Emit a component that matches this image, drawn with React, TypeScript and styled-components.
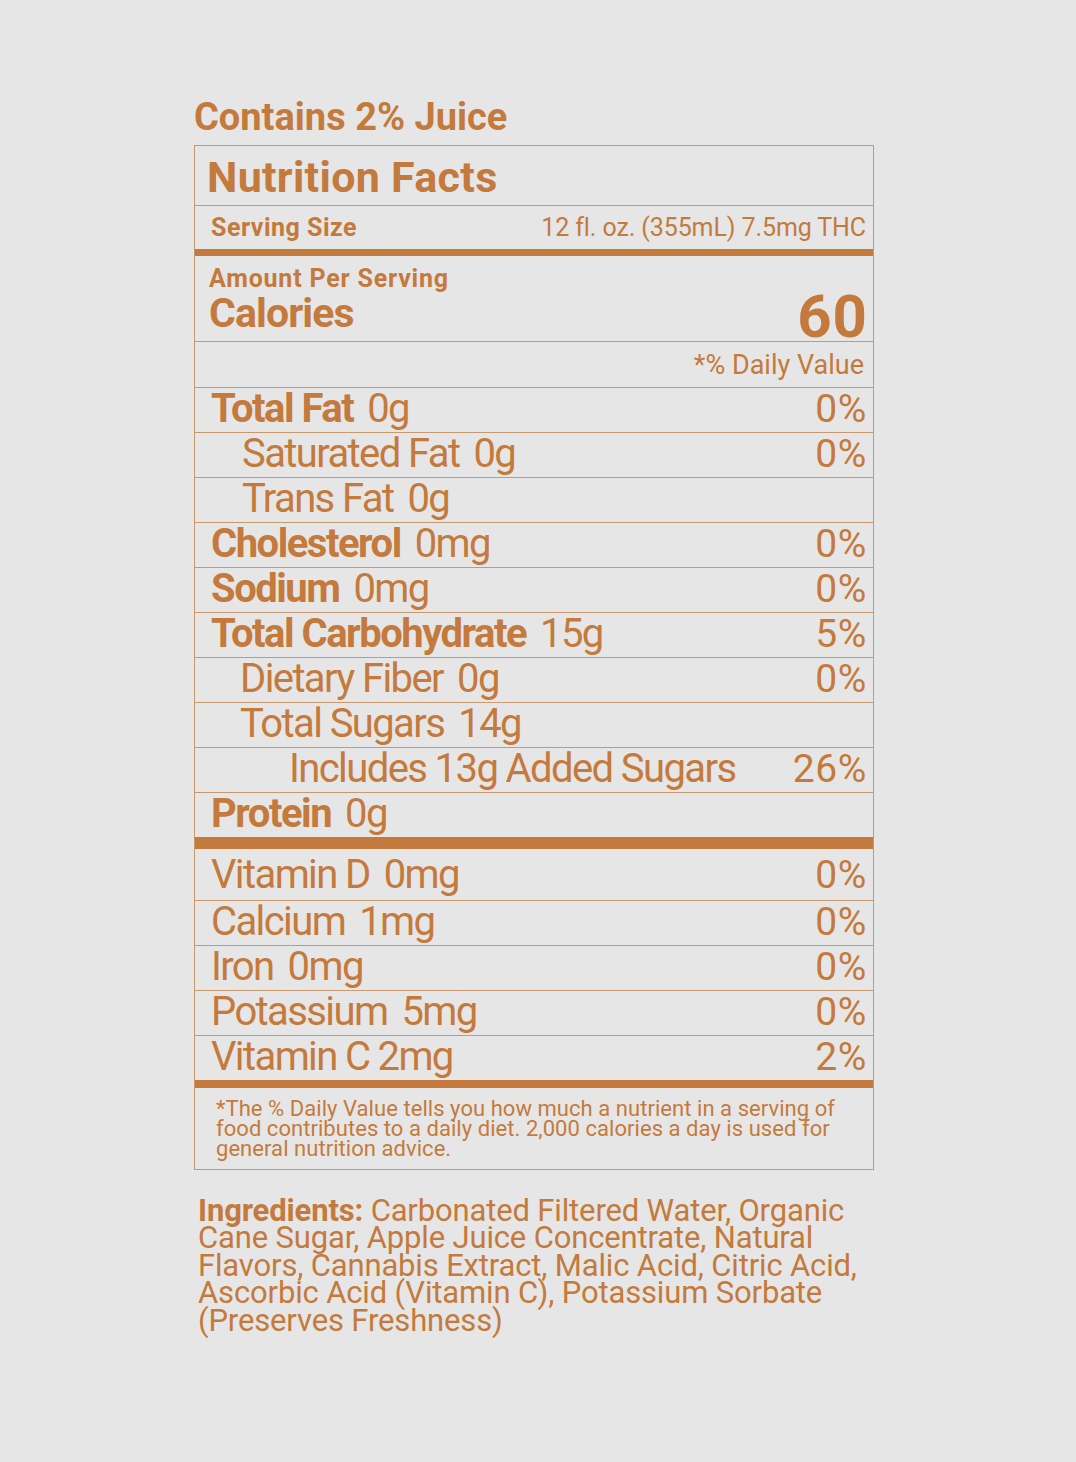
import styled, { createGlobalStyle } from 'styled-components';

type TNutrient = {
  label: string;
  amount?: string;
  dv?: string;
  bold?: boolean;
  indent?: number;
};

const ink = '#c47a3c';
const rule = '#c9986c';

const nutrients: TNutrient[] = [
  { label: 'Total Fat', amount: '0g', dv: '0%', bold: true },
  { label: 'Saturated Fat', amount: '0g', dv: '0%', indent: 31 },
  { label: 'Trans Fat', amount: '0g', indent: 31 },
  { label: 'Cholesterol', amount: '0mg', dv: '0%', bold: true },
  { label: 'Sodium', amount: '0mg', dv: '0%', bold: true },
  { label: 'Total Carbohydrate', amount: '15g', dv: '5%', bold: true },
  { label: 'Dietary Fiber', amount: '0g', dv: '0%', indent: 29 },
  { label: 'Total Sugars', amount: '14g', indent: 29 },
  { label: 'Includes 13g Added Sugars', dv: '26%', indent: 78 },
  { label: 'Protein', amount: '0g', bold: true },
];

const vitamins: TNutrient[] = [
  { label: 'Vitamin D', amount: '0mg', dv: '0%' },
  { label: 'Calcium', amount: '1mg', dv: '0%' },
  { label: 'Iron', amount: '0mg', dv: '0%' },
  { label: 'Potassium', amount: '5mg', dv: '0%' },
  { label: 'Vitamin C', amount: '2mg', dv: '2%' },
];

export default function App() {
  return (
    <>
      <GlobalStyle />
      <Page>
        <Juice>Contains 2% Juice</Juice>
        <Panel>
          <Title>Nutrition Facts</Title>
          <ServingRow>
            <strong>Serving Size</strong>
            <span>12 fl. oz. (355mL) 7.5mg THC</span>
          </ServingRow>
          <Bar $size={7} />
          <CaloriesBlock>
            <div>
              <AmountLabel>Amount Per Serving</AmountLabel>
              <CaloriesLabel>Calories</CaloriesLabel>
            </div>
            <CaloriesValue>60</CaloriesValue>
          </CaloriesBlock>
          <DailyHead>*% Daily Value</DailyHead>
          {nutrients.map((n) => (
            <Row key={n.label} $indent={n.indent ?? 0}>
              <Label $bold={n.bold}>
                {n.label}
                {n.amount && <Amount $gap={14}>{n.amount}</Amount>}
              </Label>
              {n.dv && <Dv>{n.dv}</Dv>}
            </Row>
          ))}
          <Bar $size={12} />
          {vitamins.map((v, i) => (
            <Row key={v.label} $indent={0} $first={i === 0}>
              <Label>
                {v.label}
                <Amount $gap={v.label === 'Vitamin C' ? 8 : 14}>{v.amount}</Amount>
              </Label>
              <Dv>{v.dv}</Dv>
            </Row>
          ))}
          <Bar $size={8} />
          <Footnote>
            *The % Daily Value tells you how much a nutrient in a serving of
            <br />
            food contributes to a daily diet. 2,000 calories a day is used for
            <br />
            general nutrition advice.
          </Footnote>
        </Panel>
        <Ingredients>
          <strong>Ingredients:</strong> Carbonated Filtered Water, Organic
          <br />
          Cane Sugar, Apple Juice Concentrate, Natural
          <br />
          Flavors, Cannabis Extract, Malic Acid, Citric Acid,
          <br />
          Ascorbic Acid (Vitamin C), Potassium Sorbate
          <br />
          (Preserves Freshness)
        </Ingredients>
      </Page>
    </>
  );
}

const GlobalStyle = createGlobalStyle`
  html, body {
    margin: 0;
    background: #e6e6e6;
  }
  body {
    font-family: Roboto, 'Liberation Sans', sans-serif;
    color: ${ink};
  }
`;

const Page = styled.div`
  min-height: 1462px;
  box-sizing: border-box;
  padding: 99px 0 0 194px;
`;

const Juice = styled.h1`
  margin: 0 0 10px;
  font-size: 38px;
  line-height: 36px;
  font-weight: 700;
  letter-spacing: 0;
`;

const Panel = styled.section`
  width: 680px;
  box-sizing: border-box;
  border: 1px solid ${rule};
`;

const Title = styled.h2`
  margin: 0;
  height: 59px;
  box-sizing: border-box;
  padding: 3px 0 0 12px;
  font-size: 43px;
  line-height: 56px;
  font-weight: 700;
  letter-spacing: 0.3px;
`;

const ServingRow = styled.div`
  display: flex;
  justify-content: space-between;
  height: 44px;
  box-sizing: border-box;
  border-top: 1px solid ${rule};
  padding: 1px 7px 0 16px;
  font-size: 25px;
  line-height: 42px;
  letter-spacing: -0.1px;

  strong {
    font-weight: 700;
    letter-spacing: 0.5px;
  }
`;

const Bar = styled.div<{ $size: number }>`
  height: ${(p) => p.$size}px;
  background: ${ink};
`;

const CaloriesBlock = styled.div`
  display: flex;
  justify-content: space-between;
  align-items: flex-start;
  height: 85px;
  box-sizing: border-box;
  padding: 11px 6px 0 14px;
`;

const AmountLabel = styled.div`
  font-size: 25px;
  line-height: 24px;
  font-weight: 700;
  letter-spacing: 0.8px;
`;

const CaloriesLabel = styled.div`
  margin-top: 3px;
  font-size: 41px;
  line-height: 38px;
  font-weight: 700;
  letter-spacing: -0.9px;
`;

const CaloriesValue = styled.div`
  margin-top: 25px;
  margin-right: -1px;
  font-size: 60px;
  line-height: 50px;
  font-weight: 700;
  letter-spacing: 1px;
`;

const DailyHead = styled.div`
  height: 46px;
  box-sizing: border-box;
  border-top: 1px solid ${rule};
  padding: 5px 9px 0 0;
  text-align: right;
  font-size: 27px;
  line-height: 36px;
  letter-spacing: 0;
`;

const Row = styled.div<{ $indent: number; $first?: boolean }>`
  display: flex;
  justify-content: space-between;
  align-items: baseline;
  height: ${(p) => (p.$first ? 51 : 45)}px;
  box-sizing: border-box;
  border-top: ${(p) => (p.$first ? 'none' : `1px solid ${rule}`)};
  padding: ${(p) => (p.$first ? 5 : 0)}px 6px 0 ${(p) => 16 + p.$indent}px;
  font-size: 40px;
  line-height: 42px;
  white-space: nowrap;
`;

const Label = styled.span<{ $bold?: boolean }>`
  font-weight: ${(p) => (p.$bold ? 700 : 400)};
  letter-spacing: ${(p) => (p.$bold ? '-1.5px' : '-1.6px')};
`;

const Amount = styled.span<{ $gap: number }>`
  margin-left: ${(p) => p.$gap}px;
  font-weight: 400;
  letter-spacing: -1.6px;
`;

const Dv = styled.span`
  font-size: 39px;
  letter-spacing: 0.6px;
`;

const Footnote = styled.p`
  margin: 0;
  height: 81px;
  box-sizing: border-box;
  padding: 11px 0 0 21px;
  font-size: 22px;
  line-height: 20px;
  letter-spacing: 0.05px;
`;

const Ingredients = styled.p`
  margin: 27px 0 0 4px;
  font-size: 31px;
  line-height: 27.4px;
  letter-spacing: -0.15px;

  strong {
    font-weight: 700;
  }
`;
